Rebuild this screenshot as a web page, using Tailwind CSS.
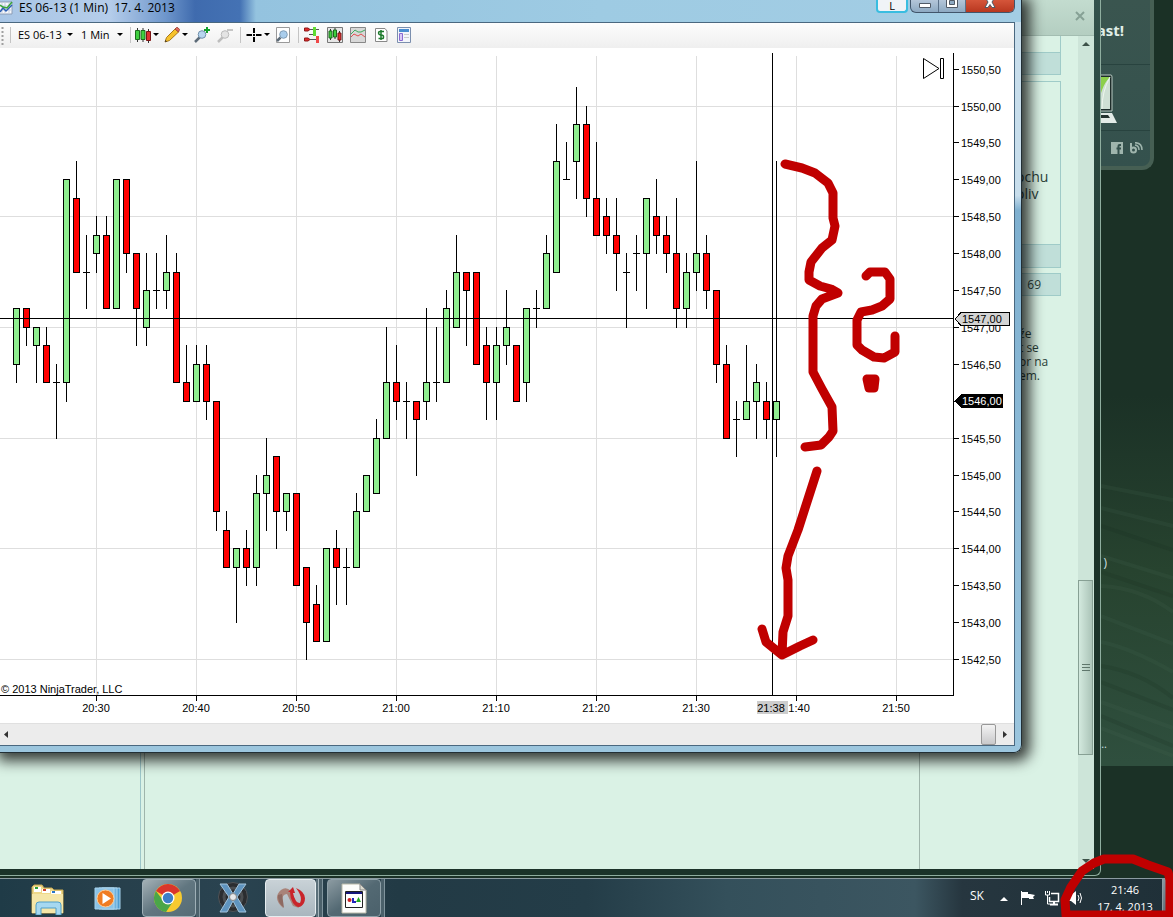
<!DOCTYPE html>
<html lang="sk">
  <head>
    <meta charset="UTF-8">
    <title>ES 06-13 (1 Min) 17. 4. 2013</title>
    <script src="https://cdn.jsdelivr.net/npm/@tailwindcss/browser@4"></script>
  </head>
  <body class="relative h-screen overflow-hidden flex flex-col bg-[#1b3126] font-['Open_Sans',sans-serif] text-[11px] text-black">
    <main class="relative flex-1 bg-linear-to-b from-[#1b3126] from-45% via-[#27432f] via-65% to-[#2f4f3e] to-87%">
      <svg class="absolute right-0 bottom-28 w-[72px] h-[300px]" viewBox="0 0 72 300" fill="none" stroke="#4a6b56" stroke-opacity=".15" stroke-width="4">
        <path d="M0 20L72 34M0 42L72 60M0 90L72 112M0 120Q40 122 72 146M0 150L72 178M0 176Q30 182 72 206M0 236L72 262M0 262L72 290"/>
        <path d="M0 60L72 84M0 106L72 130M0 200Q40 206 72 232M0 216L72 244M0 250L72 280" stroke="#14261c"/>
      </svg>
      <div class="absolute inset-x-0 bottom-0 h-28 bg-[#1b3126]"></div>

      <!-- desktop gadget -->
      <section class="absolute right-[19px] top-0 w-20 h-[170px] rounded-br-xl border-r-4 border-b-4 border-[#465f53] bg-linear-to-b from-[#3a554f] to-[#34514d] text-[#e0efe8]">
        <h2 class="h-[65px] pt-5 pr-[26px] text-right text-[15px] leading-5 font-bold border-b border-[#28433f]">ast!</h2>
        <div class="h-[66px] pt-2 pl-5 border-b border-[#28433f]">
          <svg class="w-10 h-14" viewBox="0 0 40 56">
            <path d="M-4 2H17Q18 2 18 4V38H-4Z" fill="#1e2d2a" stroke="#b9cbc3"/>
            <path d="M-4 4H16V36H-4Z" fill="#cfe0d4"/>
            <path d="M-4 4H16Q6 14 4 36H-4Z" fill="#8ccf4a"/>
            <path d="M16 4Q8 18 8 36" stroke="#eef7ee" fill="none"/>
            <path d="M-4 40H18L23 50H-4Z" fill="#e4ece8"/>
            <path d="M-2 42H14L16 45H-2Z" fill="#24332f"/>
          </svg>
        </div>
        <div class="flex justify-end gap-[6px] pt-[11px] pr-[7px]">
          <a href="#" aria-label="Facebook">
            <svg class="w-3 h-3" viewBox="0 0 12 12"><path d="M0 0H12V12H0Z" fill="#9fb5ad"/><path d="M10 3H8.500Q7.500 3 7.500 4V12M5.500 6.500H10" stroke="#34514d" stroke-width="2" fill="none"/></svg>
          </a>
          <a href="#" aria-label="Blog">
            <svg class="w-3.5 h-3" viewBox="0 0 14 12" fill="none" stroke="#9fb5ad" stroke-width="2"><path d="M2 1V8"/><circle cx="4.500" cy="8" r="2.500"/><path d="M6 3Q10 3.500 10 8M6 0.700Q13 0.700 13 8" stroke-width="1.500"/></svg>
          </a>
        </div>
      </section>
      <span class="absolute right-[66px] top-[554px] text-[#cfe0e4] text-[12px]">)</span>
      <span class="absolute right-[66px] top-[736px] text-[#cfe0e4]">..</span>

      <!-- browser behind the chart -->
      <section class="absolute left-0 right-[72px] top-0 bottom-[2px] flex flex-col pr-[6px] pb-[6px] rounded-br-md border-r border-b border-[#8fae9f] bg-linear-to-b from-[#33524c] via-[#1b3329] to-[#1b3329]">
        <header class="h-9 shrink-0 flex justify-end pt-[11px] pr-2 bg-linear-to-b from-[#c3dccf] to-[#b4cec1] border-b border-[#a3bdb1]">
          <button class="w-3 h-3" aria-label="Close">
            <svg class="w-3 h-3" viewBox="0 0 12 12"><path d="M2 1L10 9M10 1L2 9" stroke="#86a195" stroke-width="2"/></svg>
          </button>
        </header>
        <div class="flex-1 flex bg-[#daf2e5]">
          <div class="w-[141px] border-r border-[#9cc6c9]"></div>
          <div class="flex-1 ml-[3px] border-x border-[#9fb5ab]"></div>
          <aside class="w-[158px] pr-[17px] text-[#2a3f38]">
            <div class="h-4 border-r border-[#9fcbc8]"></div>
            <div class="h-[23px] border border-[#9fcbc8] bg-[#c0dfd9]"></div>
            <div class="mt-[6px] h-[187px] flex flex-col border border-[#9fcbc8]">
              <p class="flex-1 pt-[86px] pl-[95px] text-[14px] leading-[17px]">ochu<br>oliv</p>
              <div class="h-[23px] border-t border-[#9fcbc8] bg-[#c0dfd9]"></div>
            </div>
            <div class="mt-[5px] h-[23px] pr-[19px] text-right text-[12px] leading-[21px] border border-[#9fcbc8] bg-[#c0dfd9]">69</div>
            <p class="pt-[31px] pl-[99px] text-[12px] leading-[14px]">že<br>t se<br>or na<br>em.</p>
          </aside>
          <div class="w-4 flex flex-col items-center bg-[#cde5d9]">
            <button class="h-4 shrink-0" aria-label="Scroll up"><svg class="w-2 h-1" viewBox="0 0 8 4"><path d="M0 4L4 0L8 4Z" fill="#3d5249"/></svg></button>
            <div class="flex-1"></div>
            <div class="w-[15px] h-[175px] mr-px flex flex-col items-center justify-center gap-0.5 border border-[#87a094] bg-linear-to-r from-[#d3e9de] to-[#abc4b8]">
              <i class="w-2 h-px bg-[#5f776c]"></i><i class="w-2 h-px bg-[#5f776c]"></i><i class="w-2 h-px bg-[#5f776c]"></i>
            </div>
            <div class="h-[98px]"></div>
            <button class="h-4 shrink-0" aria-label="Scroll down"><svg class="w-2 h-1" viewBox="0 0 8 4"><path d="M0 0L4 4L8 0Z" fill="#3d5249"/></svg></button>
          </div>
        </div>
      </section>

      <!-- chart window -->
      <section class="absolute left-0 right-[151px] top-0 bottom-[125px] flex flex-col pr-[6px] pb-[6px] rounded-br-lg border-r border-b border-[#222f35] bg-linear-to-b from-[#c8deec] from-26% via-[#7fb0d0] via-28% to-[#9cc6de] shadow-[3px_3px_14px_5px_rgba(0,0,0,0.75)]">
        <header class="h-[22px] -mr-[6px] shrink-0 flex items-start pr-[6px] bg-[linear-gradient(90deg,#a9c6e6_0,#b5cdea_110px,#6f97cc_165px,#3f6bae_195px,#4472b4_240px,#94c3df_256px,#9ecbe3_600px,#a3cde4_100%)]">
          <svg class="w-3.5 h-4 shrink-0" viewBox="0 0 14 16">
            <path d="M-2 2H12V14H-2Z" fill="#f6f8fc" stroke="#8c9cb4"/>
            <path d="M2 2V14M5 2V14M9 2V14M0 6H12M0 10H12" stroke="#c3cede"/>
            <path d="M0 12L3 8L6 11L12 5" stroke="#2c5fb5" stroke-width="1.500" fill="none"/>
            <path d="M0 5L3 7L7 8L12 2" stroke="#3aa63a" stroke-width="1.500" fill="none"/>
          </svg>
          <h1 class="pl-[5px] text-[12px] leading-4 whitespace-pre">ES 06-13 (1 Min)  17. 4. 2013</h1>
          <div class="flex-1"></div>
          <button class="w-8 h-[13px] mr-[2px] text-[11px] leading-[7px] rounded-b-sm border-2 border-t-0 border-[#39bde0] bg-[#f0f3f7]">L</button>
          <div class="flex h-[13px] rounded-b-md overflow-hidden border border-t-0 border-[#41556b] bg-linear-to-b from-[#b4c6d9] to-[#8da9c2]">
            <button class="w-7 flex justify-center border-r border-[#5b7189]" aria-label="Minimize"><svg class="w-3 h-2" viewBox="0 0 12 8"><path d="M0.500 3.500H11.500V7.500H0.500Z" fill="#fff" stroke="#515a66"/></svg></button>
            <button class="w-[27px] flex justify-center border-r border-[#5b7189]" aria-label="Maximize"><svg class="w-3 h-2" viewBox="0 0 12 8"><path d="M0.500 -3.500H11.500V7.500H0.500Z" fill="#fff" stroke="#515a66"/><path d="M3.500 0.500H8.500V4.500H3.500Z" fill="#8da9c2" stroke="#515a66"/></svg></button>
            <button class="w-12 flex justify-center bg-linear-to-b from-[#d5553a] to-[#b8371f]" aria-label="Close"><svg class="w-3 h-2" viewBox="0 0 12 8"><path d="M1 7.500H4L6 4.500L8 7.500H11L8 2L10 -1H2L4 2Z" fill="#fff" stroke="#515a66"/></svg></button>
          </div>
        </header>

        <div class="flex-1 min-h-0 flex flex-col border-t border-r border-b border-[#4a6880] bg-white">
          <nav class="h-[25px] pb-0.5 shrink-0 flex items-center bg-linear-to-b from-[#fdfdfd] to-[#efefef]">
            <svg class="w-3 h-5 shrink-0" viewBox="0 0 12 20"><path d="M2.500 2V20" stroke="#a0a0a0" stroke-width="2" stroke-dasharray="2 2"/><path d="M10.500 2V18" stroke="#c4c4c4"/></svg>
            <select aria-label="Instrument" class="appearance-none w-[49px] ml-1.5 shrink-0 text-[11px] leading-4"><option>ES 06-13</option></select>
            <svg class="w-[6px] h-[3px]" viewBox="0 0 6 3"><path d="M0 0H6L3 3Z"/></svg>
            <select aria-label="Interval" class="appearance-none w-[35px] ml-2 shrink-0 text-[11px] leading-4"><option>1 Min</option></select>
            <svg class="w-[6px] h-[3px] ml-px" viewBox="0 0 6 3"><path d="M0 0H6L3 3Z"/></svg>
            <i class="w-px h-4 ml-[7px] mr-1 bg-[#c4c4c4]"></i>
            <button class="flex items-center gap-0.5" aria-label="Chart style">
              <svg class="w-4 h-4" viewBox="0 0 16 16"><path d="M2.500 1V15M8 1V15M13.500 2V16" stroke="#333"/><path d="M0.500 3.500H4.500V12.500H0.500ZM6 3.500H10V12.500H6Z" fill="#3fd03f" stroke="#1c6a1c"/><path d="M11.500 4.500H15.500V13.500H11.500Z" fill="#e03030" stroke="#7a1515"/></svg>
              <svg class="w-[6px] h-[3px]" viewBox="0 0 6 3"><path d="M0 0H6L3 3Z"/></svg>
            </button>
            <button class="flex items-center gap-0.5 ml-[5px]" aria-label="Drawing tools">
              <svg class="w-4 h-4" viewBox="0 0 16 16"><path d="M1 15L2.500 10.500L11 2L14.500 5L5.500 13.500Z" fill="#f6c22c" stroke="#a8781a"/><path d="M11 2L12.500 0.500Q14 0 15.500 2.500L14.500 5Z" fill="#e46a5c" stroke="#a04a40"/><path d="M1 15L1.500 13L3 14.500Z" fill="#333"/></svg>
              <svg class="w-[6px] h-[3px]" viewBox="0 0 6 3"><path d="M0 0H6L3 3Z"/></svg>
            </button>
            <button class="ml-[6px]" aria-label="Zoom in"><svg class="w-4 h-4" viewBox="0 0 16 16"><path d="M1 15L6 10" stroke="#5d6b78" stroke-width="2.500"/><circle cx="8" cy="7.500" r="3.800" fill="#b7d5ef" stroke="#7190ab"/><path d="M13 0V6M10 3H16" stroke="#12a02c" stroke-width="2"/></svg></button>
            <button class="ml-[7px]" aria-label="Zoom out"><svg class="w-4 h-4" viewBox="0 0 16 16"><path d="M1 15L6 10" stroke="#bdbdbd" stroke-width="2.500"/><circle cx="8" cy="7.500" r="3.800" fill="#e4e4e4" stroke="#bbb"/><path d="M10 3H16" stroke="#b4b4b4" stroke-width="1.500"/></svg></button>
            <i class="w-px h-4 ml-[7px] mr-[5px] bg-[#c4c4c4]"></i>
            <button class="flex items-center gap-0.5" aria-label="Crosshair">
              <svg class="w-4 h-4" viewBox="0 0 16 16"><path d="M8 1V6M8 10V15M0.500 8H6M10 8H15.500" stroke="#000" stroke-width="2"/><path d="M7 7H9V9H7Z"/></svg>
              <svg class="w-[6px] h-[3px]" viewBox="0 0 6 3"><path d="M0 0H6L3 3Z"/></svg>
            </button>
            <button class="ml-[5px]" aria-label="Zoom frame"><svg class="w-4 h-4" viewBox="0 0 16 16"><path d="M1.500 0.500H14.500V15.500H1.500Z" fill="#fff" stroke="#9a9a9a"/><path d="M2 14L5.500 10.500" stroke="#5d6b78" stroke-width="2.500"/><circle cx="8.500" cy="7.500" r="3.800" fill="#a9cdec" stroke="#7f9cb5"/></svg></button>
            <i class="w-px h-4 ml-[7px] mr-[5px] bg-[#c4c4c4]"></i>
            <div class="flex gap-[7px]">
              <button aria-label="Chart trader"><svg class="w-4 h-4" viewBox="0 0 16 16"><path d="M6 2.500H15M5 7.500H12M6 12.500H15" stroke="#555"/><path d="M0.500 1H4L6 2.500L4 4H0.500ZM0.500 11H4L6 12.500L4 14H0.500Z" fill="#e02a2a" stroke="#8c1a1a"/><path d="M9 0H12V9H9Z" fill="#5fdc32"/><path d="M12 9H15V16H12Z" fill="#f04848"/></svg></button>
              <button aria-label="Data series"><svg class="w-4 h-4" viewBox="0 0 16 16"><path d="M0.500 0.500H15.500V15.500H0.500Z" fill="#e6e6e6" stroke="#777"/><path d="M3.500 2V13M8 1V12M12.500 4V15" stroke="#333"/><path d="M2 4H5V11H2ZM6.500 3H9.500V10H6.500Z" fill="#3fd03f" stroke="#1c6a1c"/><path d="M11 6H14V13H11Z" fill="#e03030" stroke="#7a1515"/></svg></button>
              <button aria-label="Indicators"><svg class="w-4 h-4" viewBox="0 0 16 16"><path d="M0.500 0.500H15.500V15.500H0.500Z" fill="#d8d8d8" stroke="#888"/><path d="M1 7L5 3L8 5L11 5L15 3" stroke="#3dab5c" fill="none"/><path d="M1 10L4 7L8 9L11 7L15 10" stroke="#e05050" fill="none"/></svg></button>
              <button aria-label="Strategies"><svg class="w-4 h-4" viewBox="0 0 16 16"><path d="M2.500 1.500H12L14 4V14.500H2.500Z" fill="#fff" stroke="#888"/><path d="M11 4.500H7Q5.500 4.500 5.500 6T7.500 8H8.500Q10.500 8 10.500 10T9 11.500H5.500M8 3V13" stroke="#1d7a2c" stroke-width="1.500" fill="none"/></svg></button>
              <button aria-label="Properties"><svg class="w-4 h-4" viewBox="0 0 16 16"><path d="M1.500 0.500H14.500V15.500H1.500Z" fill="#f4f6fb" stroke="#7b8fae"/><path d="M3 2H13V5H3Z" fill="#4a8ed0"/><path d="M3.500 6.500H6.500V13.500H3.500Z" fill="#d9c8f5" stroke="#8a6ad0"/><path d="M8 7.500H13M8 10.500H13" stroke="#ccc"/></svg></button>
            </div>
          </nav>

          <svg id="chart" class="flex-1 min-h-0 w-full font-['Liberation_Sans',sans-serif] text-[11px]" viewBox="0 48 1014 675" preserveAspectRatio="xMinYMin slice" shape-rendering="crispEdges">
            <g id="grid" stroke="#dedede"></g>
            <g id="candles" stroke="#000"></g>
            <path d="M0 695.500H953.500V53" stroke="#000" fill="none"/>
            <g id="axis" stroke="#000"></g>
            <g id="labels"></g>
            <text x="1" y="693">© 2013 NinjaTrader, LLC</text>
            <!-- crosshair -->
            <path d="M0 318.500H954M772.500 53V695" stroke="#000"/>
            <path d="M955 319L961 312.500H1009.500V325.500H961Z" fill="#d3d3d3" stroke="#000"/>
            <text x="962" y="323">1547,00</text>
            <path d="M954 401L961 394H1003V408H961Z"/>
            <text x="962" y="405" fill="#fff">1546,00</text>
            <path d="M757 701H788V714H757Z" fill="#cdcdcd"/>
            <text x="771" y="712" text-anchor="middle">21:38</text>
            <g fill="none" stroke="#000" shape-rendering="auto"><path d="M923.500 58.500V78.500L939 68.500Z"/><path d="M940.500 58.500H943.500V78.500H940.500Z"/></g>
          </svg>

          <div class="h-[22px] shrink-0 flex items-center bg-[#ececec] border-t border-[#e0e0e0]">
            <button class="w-3 h-full flex items-center justify-center" aria-label="Scroll left"><svg class="w-1 h-[7px]" viewBox="0 0 4 7"><path d="M4 0V7L0 3.500Z" fill="#333"/></svg></button>
            <div class="flex-1"></div>
            <div class="w-[15px] h-full rounded-xs border border-[#989898] bg-linear-to-b from-[#f3f3f3] to-[#c9c9cb]"></div>
            <button class="w-[18px] h-full flex items-center justify-center" aria-label="Scroll right"><svg class="w-1 h-[7px]" viewBox="0 0 4 7"><path d="M0 0V7L4 3.500Z" fill="#333"/></svg></button>
          </div>
        </div>
      </section>
    </main>

    <footer class="h-[39px] shrink-0 flex border-t border-[#8c9ba2] bg-[linear-gradient(90deg,#1f3b47_0,#263f4b_8%,#2a4350_20%,#223a45_34%,#243d48_50%,#34505b_62%,#3c5661_78%,#26363f_82%,#1f3038_100%)]">
      <button class="ml-[30px] w-9 flex justify-center" aria-label="Explorer">
        <svg class="w-9 h-9" viewBox="0 0 36 36">
          <path d="M2 34V8L4 6H12L14 9H22L24 11H33V34Z" fill="#efd98a" stroke="#c5a650"/>
          <path d="M4 8H11V13H4Z" fill="#fff"/><path d="M12 10H20V14H12Z" fill="#fff"/><path d="M21 12H31V16H21Z" fill="#fff"/>
          <path d="M5 8H8V10H5Z" fill="#2a9e3a"/><path d="M13 10H16V12H13Z" fill="#d04028"/><path d="M22 12H25V14H22Z" fill="#2876c8"/>
          <path d="M2 15H33V34H2Z" fill="#f5e6a8"/>
          <path d="M6 36V26Q6 23 9 23H28Q31 23 31 26V36H26V29H11V36Z" fill="#a6d8f0" stroke="#4f9ec8"/>
        </svg>
      </button>
      <button class="ml-[26px] w-8 flex justify-center" aria-label="Media player">
        <svg class="w-8 h-9" viewBox="0 0 32 36">
          <path d="M10 9H28V30H10Z" fill="#4f9cd0" stroke="#a8d4ee"/><path d="M7 9H25V30H7Z" fill="#6fb2de" stroke="#a8d4ee"/><path d="M3 9H22V30H3Z" fill="#8cc3e6" stroke="#a8d4ee"/>
          <circle cx="13.500" cy="19.500" r="8.500" fill="#f07c22" stroke="#fbd0a0"/><path d="M10.500 14L19 19.500L10.500 25Z" fill="#fff"/>
        </svg>
      </button>
      <button class="ml-[18px] w-[54px] flex justify-center border border-[#9fb0b7] rounded-sm bg-linear-to-br from-[#a4b1b6] via-[#617680] to-[#566c76]" aria-label="Chrome">
        <svg class="w-8 h-9" viewBox="0 0 32 36">
          <circle cx="15" cy="18" r="14" fill="#f8ca30"/>
          <path d="M15 18L2.900 11A14 14 0 0 1 27.100 11Z" fill="#d9362b"/><path d="M2.900 11A14 14 0 0 0 13 32L19 23L9 19Z" fill="#4aa648"/>
          <circle cx="15" cy="18" r="6.500" fill="#fff"/><circle cx="15" cy="18" r="5.200" fill="#3d7fc8"/>
        </svg>
      </button>
      <i class="w-1 border-r border-[#80949d] bg-[#4b616b]"></i>
      <button class="ml-[15px] w-9 flex justify-center" aria-label="X">
        <svg class="w-9 h-9" viewBox="0 0 36 36">
          <circle cx="18" cy="18" r="14.500" fill="#2b2d30" stroke="#505458"/><circle cx="18" cy="18" r="9" fill="none" stroke="#4a4d50" stroke-width="3"/>
          <path d="M5 5H12L18 15L24 5H31L22 18L31 33H24L18 22L12 33H5L14 18Z" fill="#5f94bf" stroke="#a3c4dc"/>
          <circle cx="18" cy="18" r="3.500" fill="#e6e8ea" stroke="#888"/>
        </svg>
      </button>
      <button class="ml-[14px] w-[51px] flex justify-center border border-[#e6edf0] rounded-sm bg-linear-to-b from-[#c9d2d7] to-[#a9b6be]" aria-label="NinjaTrader">
        <svg class="w-8 h-9" viewBox="0 0 32 36">
          <path d="M8 28Q-3 18 6 10Q11 6 16 11L24 28L18 26L12 14Q5 14 8 28Z" fill="#a98379"/>
          <path d="M7 14L9 28Q2 22 3 15Z" fill="#8e6a62"/>
          <path d="M13 12L18 7L20 13L18 13Q20 23 25 23Q28 17 21 8Q33 13 29 23Q24 31 18 23Q15 18 15 12Z" fill="#c9252b"/>
        </svg>
      </button>
      <i class="w-[3px] border-r border-[#a9b8be] bg-[#5b707a]"></i>
      <i class="w-1 border-r border-[#80949d] bg-[#4b616b]"></i>
      <button class="ml-1 w-[54px] flex justify-center border border-[#8fa1a9] rounded-sm bg-linear-to-br from-[#8c9ba2] via-[#536973] to-[#4b616b]" aria-label="Image editor">
        <svg class="w-7 h-9" viewBox="0 0 28 36">
          <path d="M2 4H20L26 10V33H2Z" fill="#fdfdfb" stroke="#b9b9a8"/><path d="M20 4V10H26Z" fill="#dcdcd0" stroke="#888"/>
          <path d="M5.500 11.500H22.500V27.500H5.500Z" fill="#fff" stroke="#222"/><path d="M6 12H22V14H6Z" fill="#15157c"/>
          <circle cx="9.500" cy="20" r="2" fill="#c22"/><path d="M12 18H14V21H16V23H12Z" fill="#22b"/><path d="M18.500 17L21 22H16Z" fill="#2a2"/>
        </svg>
      </button>
      <i class="w-1 border-r border-[#80949d] bg-[#4b616b]"></i>

      <div class="flex-1"></div>
      <div class="flex text-white">
        <button class="w-[30px] pb-1 text-[12px]">SK</button>
        <button class="w-6 flex justify-center pt-[18px]" aria-label="Show hidden icons"><svg class="w-2 h-1" viewBox="0 0 8 4"><path d="M0 4L4 0L8 4Z" fill="#fff"/></svg></button>
        <button class="w-6 flex justify-center pt-2.5" aria-label="Action center"><svg class="w-4 h-[18px]" viewBox="0 0 16 18"><path d="M1.500 2V16" stroke="#fff"/><path d="M2 3H8V5H10L15 6L13 8L14 10H9V9H2Z" fill="#fff"/></svg></button>
        <button class="w-6 flex justify-center pt-2.5" aria-label="Network"><svg class="w-4 h-[18px]" viewBox="0 0 16 18" fill="none" stroke="#fff"><path d="M7 4.500H14.500V12.500H5.500V8" stroke-width="1.500"/><path d="M6 15.500H14M10 13V15" stroke-width="2"/><path d="M1.500 2V6H5.500V2M3.500 2V4M3.500 6V15H6"/></svg></button>
        <button class="w-6 flex justify-center pt-2.5" aria-label="Volume"><svg class="w-4 h-[18px]" viewBox="0 0 16 18"><path d="M1 6H3L8 2V16L3 12H1Z" fill="#fff"/><path d="M10 6Q12 9 10 12M12 4Q15 9 12 14" stroke="#fff" fill="none"/></svg></button>
        <button class="w-[74px] text-center text-[11px] leading-[17px]">21:46<br>17. 4. 2013</button>
        <div class="w-[11px] border-l border-[#8c9ba2] bg-linear-to-br from-[#8c9ba2] to-[#3a4a52]"></div>
      </div>
    </footer>

    <!-- hand-drawn notes -->
    <svg class="absolute left-0 top-0 w-full h-full pointer-events-none" fill="none" stroke="#c00000" stroke-width="9" stroke-linecap="round" stroke-linejoin="round">
      <path d="M785 164L802 168L815 173L828 183L833 193V218L835 226L832 240L822 248L811 262L809 272V280L820 286L831 289L838 293L822 299L816 306L813 316V372L822 389L832 407L833 431L829 437L821 445L805 447"/>
      <path d="M866 276L870 272H885L890 279V299L882 306L872 310L861 312L857 320V345L862 350L874 357L884 358L895 352V336"/>
      <path d="M867 379H875L874 388H869Z" fill="#c00000"/>
      <path d="M817 471L798 530L788 556L786 568L788 580V616L783 632L782 655M762 629L766 642L782 655L800 646L813 640"/>
      <path d="M1170 915H1066L1065 900L1071 887L1082 871L1094 863L1104 859H1133L1148 865L1168 872L1170 880V917"/>
    </svg>

    <script>
      // one tick is 0.25 point, counted down from the top label
      const TOP_PRICE = 1550.5
      const y = (tick) => Math.round(68.6 + 18.45 * tick)
      const GREEN = '#90ee90'
      const RED = '#ff0000'

      // high, body top, body bottom, low, up
      const bars = [
        [13,13,16,17,1],[13,13,14,15,0],[14,14,15,17,1],[14,15,17,17,0],[16,17,17,20,0],[6,6,17,18,1],[5,7,11,11,0],[9,11,11,13,0],
        [8,9,10,11,1],[8,9,13,13,0],[6,6,13,13,1],[6,6,10,11,0],[10,10,13,15,0],[10,12,14,15,1],[10,12,12,13,0],[9,11,12,13,1],
        [10,11,17,17,0],[15,17,18,18,0],[15,16,18,18,1],[15,16,18,19,0],[18,18,24,25,0],[24,25,27,27,0],[26,26,27,30,1],[25,26,27,28,0],
        [22,23,27,28,1],[20,22,23,25,1],[21,21,24,26,0],[23,23,24,25,1],[23,23,28,28,0],[27,27,30,32,0],[28,29,31,31,0],[26,26,31,31,1],
        [25,26,27,29,0],[26,27,27,29,0],[23,24,27,27,1],[22,22,24,24,1],[19,20,23,23,1],[14,17,20,20,1],[15,17,18,19,0],[17,18,18,20,0],
        [18,18,19,22,0],[13,17,18,19,1],[14,17,17,18,0],[12,13,17,17,1],[9,11,14,14,1],[11,11,12,15,0],[11,11,16,16,0],[14,15,17,19,0],
        [14,15,17,19,1],[12,14,15,16,1],[15,15,18,18,0],[13,13,17,18,1],[12,13,13,14,0],[9,10,13,13,1],[3,5,11,11,1],[4,6,6,6,0],
        [1,3,5,7,1],[2,3,7,8,0],[4,7,9,9,0],[7,8,9,10,0],[7,9,10,12,0],[10,11,11,14,0],[9,10,10,12,0],[7,7,10,13,1],
        [6,8,9,10,0],[8,9,10,11,0],[7,10,13,14,0],[10,11,13,14,1],[5,10,11,12,1],[9,10,12,13,0],[12,12,16,17,0],[15,16,20,20,0],
        [18,19,19,21,0],[15,18,19,19,1],[16,17,18,20,1],[17,18,19,20,0],[5,18,19,21,1]
      ]

      let candles = ''
      bars.forEach(([high, top, bottom, low, up], i) => {
        const x = 16 + i * 10
        candles += `<path d="M${x + 0.5} ${y(high)}V${y(low) + 1}"/>`
        if(top === bottom) {
          candles += `<path d="M${x - 3} ${y(top) + 0.5}h7"/>`
        } else {
          candles += `<rect x="${x - 2.5}" y="${y(top) + 0.5}" width="6" height="${y(bottom) - y(top)}" fill="${up ? GREEN : RED}"/>`
        }
      })
      document.querySelector('#candles').innerHTML = candles

      let grid = ''
      let axis = ''
      let labels = ''
      for(let tick = 0; tick <= 32; tick += 2) {
        if(tick % 6 === 2) grid += `<path d="M0 ${y(tick) + 0.5}H953"/>`
        axis += `<path d="M953 ${y(tick) + 0.5}h6"/>`
        // the last price has its own marker
        if(tick !== 18) labels += `<text x="961" y="${y(tick) + 5}">${(TOP_PRICE - tick / 4).toFixed(2).replace('.', ',')}</text>`
      }
      const times = ['20:30', '20:40', '20:50', '21:00', '21:10', '21:20', '21:30', '21:40', '21:50']
      times.forEach((time, i) => {
        const x = 96 + i * 100
        grid += `<path d="M${x + 0.5} 56V695"/>`
        axis += `<path d="M${x + 0.5} 695v6"/>`
        labels += `<text x="${x}" y="712" text-anchor="middle">${time}</text>`
      })
      document.querySelector('#grid').innerHTML = grid
      document.querySelector('#axis').innerHTML = axis
      document.querySelector('#labels').innerHTML = labels
    </script>
  </body>
</html>
